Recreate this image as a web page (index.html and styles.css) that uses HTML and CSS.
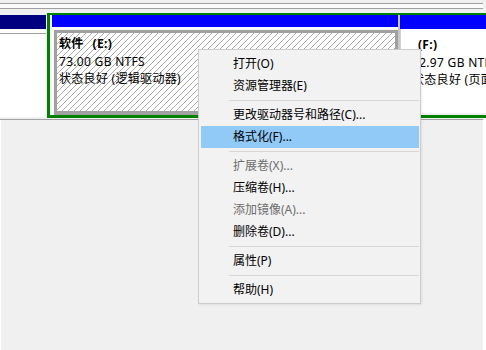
FILE: index.html
```html
<!DOCTYPE html>
<html lang="zh-CN">
<head>
<meta charset="utf-8">
<title>磁盘管理</title>
<link rel="stylesheet" href="styles.css">
</head>
<body>
<div class="app">
  <div class="top">
    <div class="strip"></div>
    <div class="rule"></div>
    <div class="band"></div>
    <div class="rule"></div>
    <div class="strip"></div>
  </div>
  <div class="disk">
    <div class="primary">
      <div class="head navy"></div>
      <div class="pbody"></div>
    </div>
    <div class="extended">
      <div class="vol vol-e">
        <div class="head blue"></div>
        <div class="vbody">
          <div class="hatch">
            <div class="line"><b>软件</b><b class="letter">(E:)</b></div>
            <div class="line">73.00 GB NTFS</div>
            <div class="line">状态良好 (逻辑驱动器)</div>
          </div>
        </div>
      </div>
      <div class="gap"></div>
      <div class="vol vol-f">
        <div class="head blue"></div>
        <div class="fbody">
          <div class="line"><b class="letter">(F:)</b></div>
          <div class="line">12.97 GB NTFS</div>
          <div class="line">状态良好 (页面文件)</div>
        </div>
      </div>
    </div>
  </div>
  <div class="rest"></div>
</div>

<div class="menu">
  <div class="item">打开(O)</div>
  <div class="item">资源管理器(E)</div>
  <div class="sep"></div>
  <div class="item">更改驱动器号和路径(C)...</div>
  <div class="item active">格式化(F)...</div>
  <div class="sep"></div>
  <div class="item disabled">扩展卷(X)...</div>
  <div class="item">压缩卷(H)...</div>
  <div class="item disabled">添加镜像(A)...</div>
  <div class="item">删除卷(D)...</div>
  <div class="sep"></div>
  <div class="item">属性(P)</div>
  <div class="sep"></div>
  <div class="item">帮助(H)</div>
</div>
</body>
</html>
```

FILE: styles.css
```css
html, body {
  margin: 0;
  padding: 0;
}
body {
  width: 486px;
  height: 350px;
  background: #ffffff;
  font-family: "Noto Sans", "Noto Sans CJK SC", sans-serif;
  font-size: 12px;
  color: #000;
  overflow: hidden;
}
.app {
  width: 486px;
  height: 350px;
  background: #f0f0f0;
  display: flex;
  flex-direction: column;
}
.top {
  display: flex;
  flex-direction: column;
  width: 483px;
}
.strip { height: 3px; background: #f0f0f0; }
.top .strip:last-child { height: 4px; }
.rule { height: 1px; background: #a0a0a0; }
.band { height: 4px; background: #fbfbfb; }

.disk {
  display: flex;
  align-items: flex-start;
  width: 483px;
  height: 106px;
  border-bottom: 1px solid #a0a0a0;
  background: #f0f0f0;
}
.head { height: 14px; }
.navy { background: #000080; }
.blue { background: #0000ff; }

.primary {
  width: 49px;
  padding-top: 2px;
  margin-right: 1px;
  display: flex;
  flex-direction: column;
}
.pbody {
  height: 84px;
  background: #fff;
  border-top: 4px solid #fff;
}
.pbody::before {
  content: "";
  display: block;
  height: 1px;
  width: 46px;
  background: #a0a0a0;
}

.extended {
  flex: 1;
  height: 100px;
  border-top: 2px solid #008000;
  border-left: 3px solid #008000;
  border-bottom: 3px solid #008000;
  display: flex;
  background: #f0f0f0;
}
.vol {
  display: flex;
  flex-direction: column;
}
.vol-e {
  width: 346px;
  padding-left: 2px;
  background: #fafafa;
}
.vol-e .head { width: 346px; }
.vbody {
  flex: 1;
  padding: 3px 0 0 2px;
}
.hatch {
  height: 76px;
  border: 3px solid #a0a0a0;
  border-bottom-width: 4px;
  background-color: #ffffff;
  background-image: repeating-linear-gradient(135deg, rgba(0,0,0,0) 0px, rgba(0,0,0,0) 3.35px, #ababab 3.35px, #ababab 4.24px);
  padding: 2px 0 0 2px;
  box-sizing: content-box;
}
.line {
  height: 17.5px;
  line-height: 17.5px;
  white-space: nowrap;
  letter-spacing: 0.3px;
}
.line b { font-weight: 700; }
.letter { margin-left: 9px; }

.gap {
  width: 2px;
  background: #c8c8c8;
}
.vol-f {
  flex: 1;
  overflow: hidden;
}
.fbody {
  flex: 1;
  background: #ffffff;
  border-left: 1px solid #d0d0d0;
  padding: 7px 0 0 11px;
  margin-bottom: 2px;
  overflow: hidden;
}
.fbody .letter { margin-left: 6px; }

.rest {
  flex: 1;
  background: #f0f0f0;
  border-left: 1px solid #ffffff;
  border-right: 3px solid #ffffff;
}

.menu {
  position: absolute;
  left: 198px;
  top: 49px;
  width: 218px;
  padding: 3px 1px 2px 2px;
  background: #f2f2f2;
  border: 1px solid #cccccc;
  box-shadow: 1px 1px 2px rgba(0,0,0,0.08);
  font-family: "Noto Sans", "Noto Sans CJK SC", sans-serif;
  font-size: 12px;
}
.item {
  height: 22px;
  line-height: 22px;
  padding-left: 32px;
  white-space: nowrap;
  color: #000;
}
.item.active { background: #91c9f7; }
.item.disabled { color: #6d6d6d; }
.sep {
  height: 1px;
  margin: 3px 0 3px 28px;
  background: #d7d7d7;
}
```
